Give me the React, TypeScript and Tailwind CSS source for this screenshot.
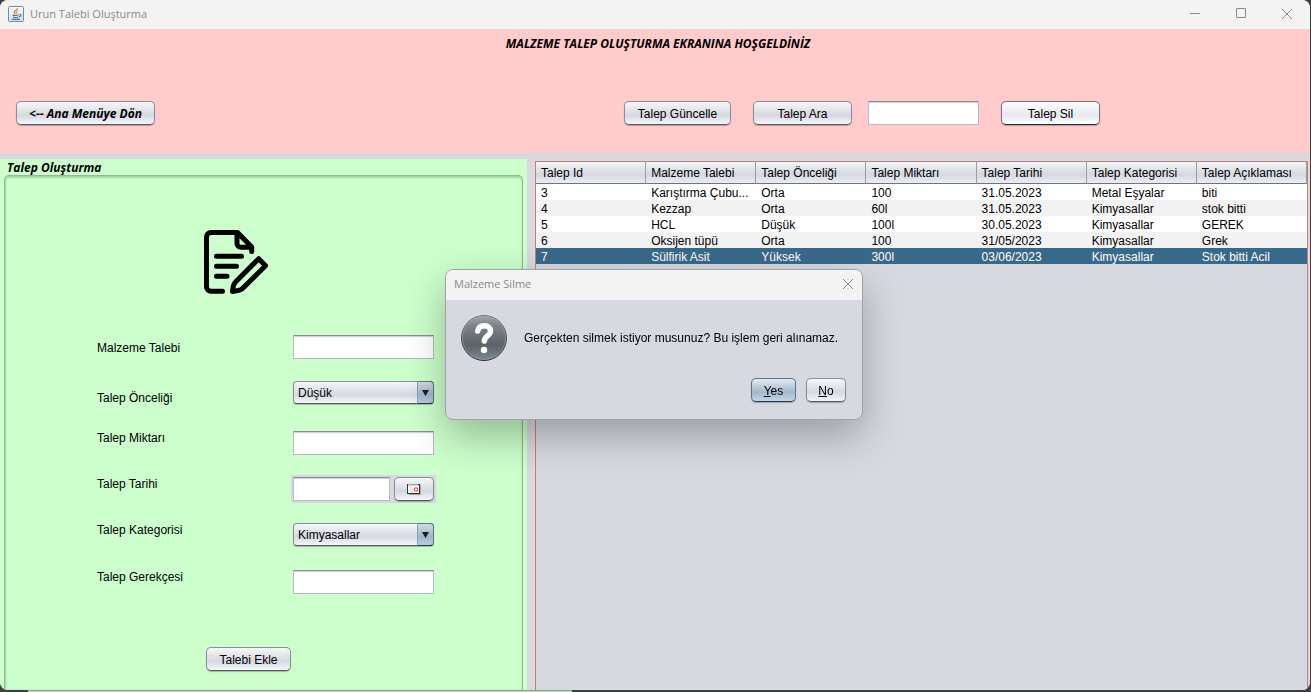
import { useState } from "react";
import type { ReactNode } from "react";

const columns = [
  "Talep Id",
  "Malzeme Talebi",
  "Talep Önceliği",
  "Talep Miktarı",
  "Talep Tarihi",
  "Talep Kategorisi",
  "Talep Açıklaması",
];

const requests = [
  ["3", "Karıştırma Çubu...", "Orta", "100", "31.05.2023", "Metal Eşyalar", "biti"],
  ["4", "Kezzap", "Orta", "60l", "31.05.2023", "Kimyasallar", "stok bitti"],
  ["5", "HCL", "Düşük", "100l", "30.05.2023", "Kimyasallar", "GEREK"],
  ["6", "Oksijen tüpü", "Orta", "100", "31/05/2023", "Kimyasallar", "Grek"],
  ["7", "Sülfirik Asit", "Yüksek", "300l", "03/06/2023", "Kimyasallar", "Stok bitti Acil"],
];

const buttonBase =
  "h-6 shrink-0 rounded-[5px] border text-center leading-4 shadow-[0_1px_1px_rgba(0,0,0,0.25)]";
const buttonGray =
  "border-[#8b8e94] border-b-[#55565f] bg-linear-to-b from-[#f6f7f9] via-[#d5d8df] via-60% to-[#f4f6fc]";
const buttonHover =
  "border-[#74767d] border-b-[#262a38] bg-linear-to-b from-[#fdfdfe] via-[#e6e9f0] via-60% to-[#ffffff]";
const buttonBlue =
  "border-[#5f7587] border-b-[#28394a] bg-linear-to-b from-[#e3ebf2] via-[#a3b8cb] via-60% to-[#c1d6e9]";
const fieldStyle =
  "h-6 min-w-0 border border-[#b9babd] border-t-[#8d8e91] bg-white px-1.5 shadow-[inset_0_2px_1px_-1px_#cfcfcf] outline-none";

function JavaIcon() {
  return (
    <svg width="16" height="16" viewBox="0 0 16 16" fill="none" aria-hidden="true">
      <defs>
        <linearGradient id="java-bg" x1="0" y1="0" x2="0" y2="1">
          <stop offset="0" stopColor="#fafbfc" />
          <stop offset="1" stopColor="#d3dde6" />
        </linearGradient>
      </defs>
      <rect x="0.5" y="0.5" width="15" height="15" rx="1" fill="url(#java-bg)" stroke="#6f8ba5" />
      <path d="M9.300 2.200C9.800 4.300 5.900 4.800 6.200 6.300C6.400 7.100 7.100 7.400 7.300 8" stroke="#e8821e" strokeWidth="1.300" />
      <path d="M10.300 4.800C8.600 5.400 8.300 6 8.700 6.800C9 7.400 8.800 7.800 8.400 8.200" stroke="#e8821e" strokeWidth="1" />
      <path d="M4.500 9C5.500 9.700 9.500 9.500 10.600 9M5.200 11C6.500 11.700 9 11.600 10.200 11M11.400 8.500C13.800 8.200 13.400 10.400 11 10.700M3.800 12.900C5.500 13.600 10.500 13.600 12 12.900" stroke="#4a7399" strokeWidth="1.100" />
    </svg>
  );
}

function DocumentPencilIcon() {
  return (
    <svg
      width="64"
      height="64"
      viewBox="0 0 64 64"
      fill="none"
      stroke="#000"
      strokeWidth="5"
      strokeLinecap="round"
      strokeLinejoin="round"
      aria-hidden="true"
    >
      <path d="M18.500 61.300H7A4.500 4.500 0 0 1 2.500 56.800V7A4.500 4.500 0 0 1 7 2.500H33.500L47.700 17V21.500" />
      <path d="M33 3V13.500A4 4 0 0 0 37 17.300H47" />
      <path d="M12.500 26.300H37.500M12.500 36.300H32.500M12.500 46.300H23" />
      <path d="M54.700 28.700L61.500 35.800L38.500 58.500Q36.500 60.500 28.500 61.500Q29 54.500 31.500 52Z" />
    </svg>
  );
}

function CalendarIcon() {
  return (
    <svg width="14" height="12" viewBox="0 0 14 12" fill="none" aria-hidden="true">
      <path d="M2 11.500H13.500V2" stroke="#aaa59e" />
      <rect x="0.500" y="1.500" width="12" height="9" fill="#f4f5f8" stroke="#343434" />
      <path d="M1 1.500H6" stroke="#e0a43c" />
      <path d="M6 1.500H11" stroke="#7fa9d8" />
      <path d="M1 2.500H12" stroke="#cfdcec" />
      <path d="M3.500 3V10M5.500 3V10" stroke="#dfe1e6" />
      <circle cx="9" cy="6.500" r="1.700" stroke="#e2605d" strokeWidth="1.200" />
    </svg>
  );
}

function QuestionIcon() {
  return (
    <svg width="48" height="48" viewBox="0 0 48 48" aria-hidden="true">
      <defs>
        <linearGradient id="question-bg" x1="0" y1="0" x2="0" y2="1">
          <stop offset="0" stopColor="#a3a6aa" />
          <stop offset="0.250" stopColor="#7b8085" />
          <stop offset="0.650" stopColor="#5c6369" />
          <stop offset="1" stopColor="#7e8890" />
        </linearGradient>
        <linearGradient id="question-edge" x1="0" y1="0" x2="0" y2="1">
          <stop offset="0" stopColor="#6e7276" />
          <stop offset="1" stopColor="#252d37" />
        </linearGradient>
      </defs>
      <circle cx="24" cy="24" r="22.500" fill="url(#question-bg)" stroke="url(#question-edge)" />
      <circle cx="24" cy="24" r="21.500" fill="none" stroke="#a7adb3" strokeOpacity="0.500" />
      <path
        d="M17.800 17C18.300 13.200 20.800 11.800 24.300 11.800C28.300 11.800 30.500 14 30.500 17C30.500 21.800 24.600 22 24.300 27"
        fill="none"
        stroke="#fff"
        strokeWidth="5.500"
        strokeLinecap="round"
      />
      <circle cx="24" cy="36" r="3.200" fill="#fff" />
    </svg>
  );
}

function CloseIcon() {
  return (
    <svg width="12" height="12" viewBox="0 0 12 12" fill="none" stroke="#8a8a8a" aria-hidden="true">
      <path d="M1 1L11 11M11 1L1 11" />
    </svg>
  );
}

function FormRow({ id, label, row, labelClass, children }: {
  id: string;
  label: string;
  row: string;
  labelClass: string;
  children: ReactNode;
}) {
  return (
    <div className={`flex items-start ${row}`}>
      <label htmlFor={id} className={`w-[196px] shrink-0 leading-[14px] ${labelClass}`}>
        {label}
      </label>
      {children}
    </div>
  );
}

function ComboBox({ id, options }: { id: string; options: string[] }) {
  return (
    <div className="relative w-[141px]">
      <select
        id={id}
        className={`block h-[23px] w-full appearance-none rounded-[4px] border pr-5 pl-1 leading-4 shadow-[0_1px_1px_rgba(0,0,0,0.25)] outline-none ${buttonGray}`}
      >
        {options.map((option) => (
          <option key={option}>{option}</option>
        ))}
      </select>
      <span className="pointer-events-none absolute top-0 right-0 flex h-[23px] w-[17px] items-center justify-center rounded-r-[4px] border border-[#5f7587] border-b-[#28394a] border-l-[#8ba1b5] bg-linear-to-b from-[#d0dbe5] via-[#9fb5c9] via-60% to-[#b9cfe3]">
        <svg width="7" height="6" viewBox="0 0 7 6" aria-hidden="true">
          <path d="M0 0H7L3.500 6Z" fill="#1c1c1c" />
        </svg>
      </span>
    </div>
  );
}

function ConfirmDialog({ onClose }: { onClose: () => void }) {
  return (
    <div className="fixed inset-0 flex items-center justify-center pr-[3px] pb-[3px]">
      <section
        role="dialog"
        aria-labelledby="dialog-title"
        className="w-[418px] overflow-hidden rounded-lg border border-[#a0a2a6] bg-[#d6d9e0] shadow-[0_16px_40px_rgba(0,0,0,0.28)]"
      >
        <header className="flex h-[30px] items-center justify-between bg-[#f3f3f3] pr-2 pb-0.5 pl-2">
          <h2 id="dialog-title" className="font-['Open_Sans',sans-serif] text-[11px] leading-4 text-[#8a8a8a]">
            Malzeme Silme
          </h2>
          <button type="button" aria-label="Kapat" onClick={onClose}>
            <CloseIcon />
          </button>
        </header>
        <div className="flex items-center gap-4 pt-3.5 pl-3.5">
          <QuestionIcon />
          <p className="whitespace-nowrap">Gerçekten silmek istiyor musunuz? Bu işlem geri alınamaz.</p>
        </div>
        <div className="flex justify-end gap-2.5 pt-4 pr-4 pb-[17px]">
          <button type="button" onClick={onClose} className={`w-[45px] pt-0.5 ${buttonBase} ${buttonBlue}`}>
            <span className="underline">Y</span>es
          </button>
          <button type="button" onClick={onClose} className={`w-10 pt-0.5 ${buttonBase} ${buttonGray}`}>
            <span className="underline">N</span>o
          </button>
        </div>
      </section>
    </div>
  );
}

export default function App() {
  const [dialogOpen, setDialogOpen] = useState(true);
  const [selected, setSelected] = useState("7");

  return (
    <div className="flex min-h-screen flex-col bg-[#3d3f41] font-['Liberation_Sans',Arial,sans-serif] text-[12px] text-black">
      <div className="mr-px flex grow flex-col overflow-hidden rounded-lg bg-[#d6d9e0]">
        <header className="flex h-[29px] items-center bg-[#f3f3f3] pb-0.5 pl-2">
          <JavaIcon />
          <h1 className="ml-1.5 grow font-['Open_Sans',sans-serif] text-[11px] leading-4 text-[#8a8a8a]">
            Urun Talebi Oluşturma
          </h1>
          <div className="flex items-center gap-[34px] pr-[17px]">
            <button type="button" aria-label="Simge durumuna küçült">
              <svg width="12" height="12" viewBox="0 0 12 12" stroke="#8a8a8a" aria-hidden="true">
                <path d="M1 5.500H11" />
              </svg>
            </button>
            <button type="button" aria-label="Ekranı kapla">
              <svg width="12" height="12" viewBox="0 0 12 12" fill="none" stroke="#8a8a8a" aria-hidden="true">
                <rect x="1.500" y="0.500" width="9" height="9" rx="0.500" />
              </svg>
            </button>
            <button type="button" aria-label="Pencereyi kapat">
              <CloseIcon />
            </button>
          </div>
        </header>

        <section className="bg-[#ffcbcb] pt-[7px] pb-7">
          <h2 className="pl-1.5 text-center font-['Open_Sans',sans-serif] text-[12px] leading-4 font-bold italic">
            MALZEME TALEP OLUŞTURMA EKRANINA HOŞGELDİNİZ
          </h2>
          <div className="mt-[49px] flex items-center pr-[210px] pl-4">
            <button
              type="button"
              className={`mr-auto w-[139px] pt-0.5 font-['Open_Sans',sans-serif] font-bold italic ${buttonBase} ${buttonGray}`}
            >
              &lt;-- Ana Menüye Dön
            </button>
            <button type="button" className={`w-[107px] pt-0.5 ${buttonBase} ${buttonGray}`}>
              Talep Güncelle
            </button>
            <button type="button" className={`ml-[22px] w-[99px] pt-0.5 ${buttonBase} ${buttonGray}`}>
              Talep Ara
            </button>
            <input type="text" aria-label="Aranacak talep" className={`ml-4 w-[111px] ${fieldStyle}`} />
            <button
              type="button"
              onClick={() => setDialogOpen(true)}
              className={`ml-[22px] w-[99px] pt-0.5 ${buttonBase} ${buttonHover}`}
            >
              Talep Sil
            </button>
          </div>
        </section>

        <main className="mt-1.5 grid grow grid-cols-[527fr_777fr] gap-1.5">
          <section className="flex flex-col bg-[#ccffcc] px-1">
            <h2 className="h-4 pl-[3px] font-['Open_Sans',sans-serif] text-[12px] leading-[18px] font-bold italic">
              Talep Oluşturma
            </h2>
            <form
              onSubmit={(event) => event.preventDefault()}
              className="flex grow flex-col items-center rounded-t-[5px] border border-b-0 border-[#93b893] pb-[19px] shadow-[inset_0_2px_2px_#a9d4a9,inset_1px_0_2px_#a9d4a9]"
            >
              <div className="mt-[54px] pr-14">
                <DocumentPencilIcon />
              </div>
              <div className="mt-[41px] pl-1">
                <FormRow id="malzeme" label="Malzeme Talebi" row="h-[46px]" labelClass="pt-1.5">
                  <input id="malzeme" type="text" className={`w-[141px] ${fieldStyle}`} />
                </FormRow>
                <FormRow id="oncelik" label="Talep Önceliği" row="h-[50px]" labelClass="pt-2.5">
                  <ComboBox id="oncelik" options={["Düşük", "Orta", "Yüksek"]} />
                </FormRow>
                <FormRow id="miktar" label="Talep Miktarı" row="h-[46px]" labelClass="">
                  <input id="miktar" type="text" className={`w-[141px] ${fieldStyle}`} />
                </FormRow>
                <FormRow id="tarih" label="Talep Tarihi" row="h-[46px]" labelClass="">
                  <div className="flex w-[141px] justify-between bg-[#d6d9e0] shadow-[0_0_0_2px_#d6d9e0]">
                    <input id="tarih" type="text" className={`w-[97px] ${fieldStyle}`} />
                    <button
                      type="button"
                      aria-label="Tarih seç"
                      className={`flex w-10 items-center justify-center ${buttonBase} ${buttonGray}`}
                    >
                      <CalendarIcon />
                    </button>
                  </div>
                </FormRow>
                <FormRow id="kategori" label="Talep Kategorisi" row="h-[47px]" labelClass="">
                  <ComboBox id="kategori" options={["Kimyasallar", "Metal Eşyalar"]} />
                </FormRow>
                <FormRow id="gerekce" label="Talep Gerekçesi" row="h-6" labelClass="">
                  <input id="gerekce" type="text" className={`w-[141px] ${fieldStyle}`} />
                </FormRow>
              </div>
              <div className="mt-[53px] pr-[30px]">
                <button type="submit" className={`w-[85px] pt-0.5 ${buttonBase} ${buttonGray}`}>
                  Talebi Ekle
                </button>
              </div>
            </form>
          </section>

          <section className="flex flex-col bg-[#ffcbcb] px-0.5 pt-0.5">
            <div className="grow border border-b-0 border-[#8f9299] bg-[#d6d9e0]">
              <table className="w-full table-fixed border-separate border-spacing-0 text-left">
                <thead>
                  <tr>
                    {columns.map((column) => (
                      <th
                        key={column}
                        scope="col"
                        className="h-[22px] border-r border-b border-r-[#9a9da4] border-b-[#6f737b] bg-linear-to-b from-[#f3f4f7] via-[#d5d8df] via-60% to-[#eaedf4] p-0 pl-[5px] leading-4 font-normal whitespace-nowrap"
                      >
                        {column}
                      </th>
                    ))}
                  </tr>
                </thead>
                <tbody>
                  {requests.map((request) => (
                    <tr
                      key={request[0]}
                      onClick={() => setSelected(request[0])}
                      className={
                        request[0] === selected
                          ? "bg-[#39698a] text-white"
                          : "odd:bg-white even:bg-[#f2f2f2]"
                      }
                    >
                      {request.map((value, index) => (
                        <td key={columns[index]} className="h-4 truncate p-0 pt-0.5 pr-1 pl-[5px] leading-[14px]">
                          {value}
                        </td>
                      ))}
                    </tr>
                  ))}
                </tbody>
              </table>
            </div>
          </section>
        </main>
      </div>
      <div className="flex h-0.5 shrink-0" aria-hidden="true">
        <span className="w-7" />
        <span className="w-[544px] border-t border-[#8aa88a] bg-[#c3cfc3]" />
      </div>

      {dialogOpen && <ConfirmDialog onClose={() => setDialogOpen(false)} />}
    </div>
  );
}
